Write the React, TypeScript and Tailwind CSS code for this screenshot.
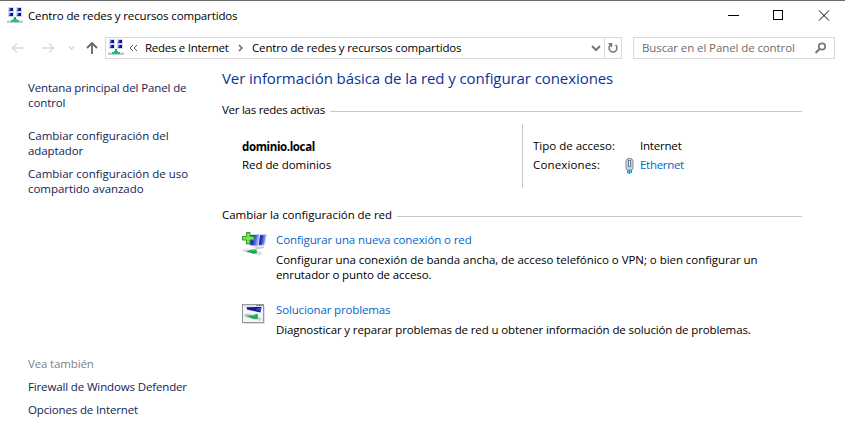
import React from "react";

function NetworkIcon() {
  const screens = [
    [1, 0],
    [9, 0],
    [1, 5],
    [9, 5],
  ];
  return (
    <svg width="16" height="16" viewBox="0 0 16 16" shapeRendering="crispEdges" className="-mt-[2px] shrink-0">
      {screens.map(([x, y]) => (
        <g key={`${x}-${y}`}>
          <rect x={x} y={y} width="6" height="5" fill="#d3d9e8" />
          <rect x={x + 1} y={y + 1} width="4" height="3" fill="#2432c4" />
          <rect x={x + 1} y={y + 1} width="1" height="2" fill="#7d90ee" />
          <rect x={x + 3} y={y + 1} width="2" height="3" fill="#0c1590" />
        </g>
      ))}
      <rect x="0" y="13" width="16" height="3" fill="#c4c9cc" />
      <rect x="0" y="13" width="16" height="1" fill="#e1e5e7" />
      <rect x="7" y="10" width="2" height="3" fill="#12a968" />
      <rect x="6" y="12" width="4" height="1" fill="#14b872" />
      <rect x="4" y="13" width="8" height="2" fill="#15c77a" />
    </svg>
  );
}

function ConnectionIcon() {
  return (
    <svg width="26" height="26" viewBox="0 0 26 26" className="shrink-0">
      <defs>
        <linearGradient id="screen" x1="0" y1="0" x2="1" y2="0.2">
          <stop offset="0" stopColor="#0a1690" />
          <stop offset="0.5" stopColor="#1d2fd0" />
          <stop offset="1" stopColor="#a9bbfb" />
        </linearGradient>
      </defs>
      <path d="M16 3 L24.500 2.200 L22.500 13 L15 14Z" fill="url(#screen)" stroke="#d5dbe8" />
      <path d="M6.500 3 L17.500 2 L16.200 14.500 L8 13.500Z" fill="url(#screen)" stroke="#dde2ec" />
      <path d="M11 15.500 L16 15 L21.500 14 L22 16 L15 17.500Z" fill="#c9ced6" />
      <path d="M0.500 17.500 L6 16.500 L20.500 20.500 L18 23.500 L12 22 L1 19.500Z" fill="#d9dddf" />
      <path d="M4 19.500 L11 17.200 L14.500 17.800 L15 20.800 L12 21.800Z" fill="#17a052" />
      <path d="M7 19 L12 18 L14 19.200Z" fill="#3fd07c" />
      <path d="M4.500 0.500 h3.500 v4 h4 v3.500 h-4 v4 h-3.500 v-4 h-4 v-3.500 h4Z" fill="#7ee05a" stroke="#2c9c1f" />
    </svg>
  );
}

function TroubleshootIcon() {
  return (
    <svg width="24" height="21" viewBox="0 0 24 21" className="shrink-0">
      <rect x="1.500" y="1.500" width="21.500" height="18.500" rx="1" fill="#dedede" />
      <rect x="0.500" y="0.500" width="21" height="18" fill="#f5f6f7" stroke="#92979b" />
      <rect x="1" y="1" width="20" height="2" fill="#e0e4e7" />
      <path d="M14.500 1.500h1.500M17 1.500h1.500M19.500 1.500h1" stroke="#4a4f55" />
      <path d="M4.500 3.200 L19.500 3 L18.500 8.500 L14 7.500 L5 5.500Z" fill="#111d93" />
      <path d="M13 5 L19 4 L18.600 7Z" fill="#4055c9" />
      <path d="M2 10 L7 9.500 L20 14.500 L18 17 L2 12.500Z" fill="#ccd2d5" />
      <path d="M3.500 11.800 L9 11.500 L15.500 9.800 L16 14.500 L12 15Z" fill="#19a653" />
      <path d="M7 12 L14 11 L13 12.500Z" fill="#3acb77" />
    </svg>
  );
}

function PlugIcon() {
  return (
    <svg width="9" height="17" viewBox="0 0 9 17" className="mt-px ml-px shrink-0">
      <path d="M1.500 1.500 h1 v-1 h4 v1 h1 l0.500 1 v8 l-1 1.500 h-5 l-1 -1.500 v-8Z" fill="#c6d0df" stroke="#8392a8" />
      <rect x="3.500" y="2.500" width="2" height="6" fill="#f2f5fa" stroke="#6d7c93" />
      <path d="M2.500 12v3M4.500 12v4M6.500 12v3" stroke="#2b8db8" />
      <path d="M3.500 12v4M5.500 12v3" stroke="#62c6e4" />
    </svg>
  );
}

function TitleBar() {
  return (
    <header className="flex h-[30px] items-center pl-[7px]">
      <NetworkIcon />
      <h1 className="ml-[5px] leading-4 tracking-[-0.14px]">Centro de redes y recursos compartidos</h1>
      <svg width="104" height="12" viewBox="0 0 104 12" className="-mt-[2px] mr-[13px] ml-auto" fill="none" stroke="#000">
        <path d="M0 6.500h11" />
        <rect x="45.500" y="1.500" width="9" height="9" />
        <path d="M91 1.500l10 10M101 1.500l-10 10" />
      </svg>
    </header>
  );
}

function NavBar() {
  return (
    <nav className="mt-[6px] flex h-[22px] items-center">
      <svg width="105" height="22" viewBox="0 0 105 22" fill="none" className="shrink-0">
        <path d="M24 11H12.500M17 6.500L12.500 11L17 15.500" stroke="#dadada" strokeWidth="1.500" />
        <path d="M42 11h11.500M49 6.500L53.500 11L49 15.500" stroke="#dadada" strokeWidth="1.500" />
        <path d="M69 9.500l2.500 2.500l2.500-2.500" stroke="#d4d4d4" strokeWidth="1.300" />
        <path d="M92 17V6M87 11l5-5l5 5" stroke="#666" strokeWidth="1.800" />
      </svg>
      <div className="flex h-[22px] w-[517px] items-center border border-[#d9d9d9] pl-[2px]">
        <NetworkIcon />
        <svg width="9" height="8" viewBox="0 0 9 8" fill="none" stroke="#555" className="ml-[5px]">
          <path d="M4 1L1 4l3 3M8 1L5 4l3 3" />
        </svg>
        <span className="ml-[7px] w-[84px] tracking-[-0.28px] whitespace-nowrap">Redes e Internet</span>
        <svg width="5" height="8" viewBox="0 0 5 8" fill="none" stroke="#666" strokeWidth="1.500" className="ml-[9px]">
          <path d="M1 1l3 3l-3 3" />
        </svg>
        <span className="ml-[9px] tracking-[-0.14px] whitespace-nowrap">Centro de redes y recursos compartidos</span>
        <svg width="10" height="8" viewBox="0 0 10 8" fill="none" stroke="#777" strokeWidth="2" className="mr-[3px] ml-auto">
          <path d="M1 2l4 4l4-4" />
        </svg>
        <div className="flex h-full w-[17px] items-center justify-center border-l border-[#d9d9d9]">
          <svg width="12" height="12" viewBox="0 0 12 12" fill="none" stroke="#777" strokeWidth="1.500">
            <path d="M3.500 2.800A4 4 0 1 0 8.500 2.800M1.500 1.700h3v3.300" />
          </svg>
        </div>
      </div>
      <div className="ml-[11px] flex h-[22px] w-[202px] items-center border border-[#d9d9d9] pr-[7px] pl-[8px] text-[#6d6d6d]">
        <span className="tracking-[-0.1px] whitespace-nowrap">Buscar en el Panel de control</span>
        <svg width="13" height="12" viewBox="0 0 13 12" fill="none" stroke="#777" className="ml-auto">
          <circle cx="8" cy="4.500" r="3.200" strokeWidth="1.700" />
          <path d="M5.500 7L1.500 11" strokeWidth="2" />
        </svg>
      </div>
    </nav>
  );
}

function Sidebar() {
  return (
    <aside className="flex w-[222px] shrink-0 flex-col pt-[21px] pl-[28px] leading-[15px] text-[#151c55]">
      <a>
        <span className="block tracking-[-0.13px]">Ventana principal del Panel de</span>
        <span className="block">control</span>
      </a>
      <a className="mt-[18px]">
        <span className="block tracking-normal">Cambiar configuración del</span>
        <span className="block">adaptador</span>
      </a>
      <a className="mt-[8px]">
        <span className="block tracking-normal">Cambiar configuración de uso</span>
        <span className="block tracking-[-0.05px]">compartido avanzado</span>
      </a>
      <span className="mt-[160px] tracking-[-0.15px] text-[#838383]">Vea también</span>
      <a className="mt-[8px] tracking-[-0.14px]">Firewall de Windows Defender</a>
      <a className="mt-[8px] tracking-[-0.15px]">Opciones de Internet</a>
    </aside>
  );
}

function SectionTitle({ children }: { children: React.ReactNode }) {
  return (
    <h3 className="flex h-[15px] items-center gap-[5px]">
      {children}
      <span className="mt-[4px] h-px grow bg-[#c8c8c8]" />
    </h3>
  );
}

function Main() {
  return (
    <main className="w-[580px] leading-[15px]">
      <h2 className="mt-[8px] text-[15px] leading-[22px] tracking-[-0.08px] text-[#0a3399]">
        Ver información básica de la red y configurar conexiones
      </h2>
      <div className="mt-[13px]">
        <SectionTitle>
          <span className="tracking-[-0.26px]">Ver las redes activas</span>
        </SectionTitle>
      </div>
      <section className="mt-[7px] flex h-[64px]">
        <div className="w-[300px] pt-[15px] pl-[20px]">
          <p className="font-bold tracking-[-0.37px]">dominio.local</p>
          <p className="mt-[3px] tracking-[-0.05px]">Red de dominios</p>
        </div>
        <dl className="grid grid-cols-[91px_16px_auto] content-start gap-y-[4px] border-l border-[#c8c8c8] pt-[14px] pl-[10px]">
          <dt className="tracking-normal">Tipo de acceso:</dt>
          <span />
          <dd className="tracking-[-0.2px]">Internet</dd>
          <dt className="tracking-[0.15px]">Conexiones:</dt>
          <PlugIcon />
          <dd className="tracking-[-0.3px] text-[#0066cc]">Ethernet</dd>
        </dl>
      </section>
      <div className="mt-[19px]">
        <SectionTitle>
          <span className="tracking-[-0.04px]">Cambiar la configuración de red</span>
        </SectionTitle>
      </div>
      <section className="mt-[10px] flex pl-[20px]">
        <div className="w-[34px]"><ConnectionIcon /></div>
        <div>
          <a className="block text-[#0066cc]">Configurar una nueva conexión o red</a>
          <p className="mt-[5px] whitespace-nowrap">
            <span className="block tracking-[-0.05px]">
              Configurar una conexión de banda ancha, de acceso telefónico o VPN; o bien configurar un
            </span>
            <span className="block">enrutador o punto de acceso.</span>
          </p>
        </div>
      </section>
      <section className="mt-[20px] flex pl-[20px]">
        <div className="w-[34px] pt-[2px]"><TroubleshootIcon /></div>
        <div>
          <a className="block tracking-[-0.14px] text-[#0066cc]">Solucionar problemas</a>
          <p className="mt-[5px] tracking-[-0.12px] whitespace-nowrap">
            Diagnosticar y reparar problemas de red u obtener información de solución de problemas.
          </p>
        </div>
      </section>
    </main>
  );
}

export default function App() {
  return (
    <div className="h-[437px] w-[845px] overflow-hidden border-t border-[#6b6b6b] bg-white font-['Open_Sans','Noto_Sans',sans-serif] text-[11.5px] text-black">
      <TitleBar />
      <NavBar />
      <div className="flex tracking-[-0.1px]">
        <Sidebar />
        <Main />
      </div>
    </div>
  );
}
